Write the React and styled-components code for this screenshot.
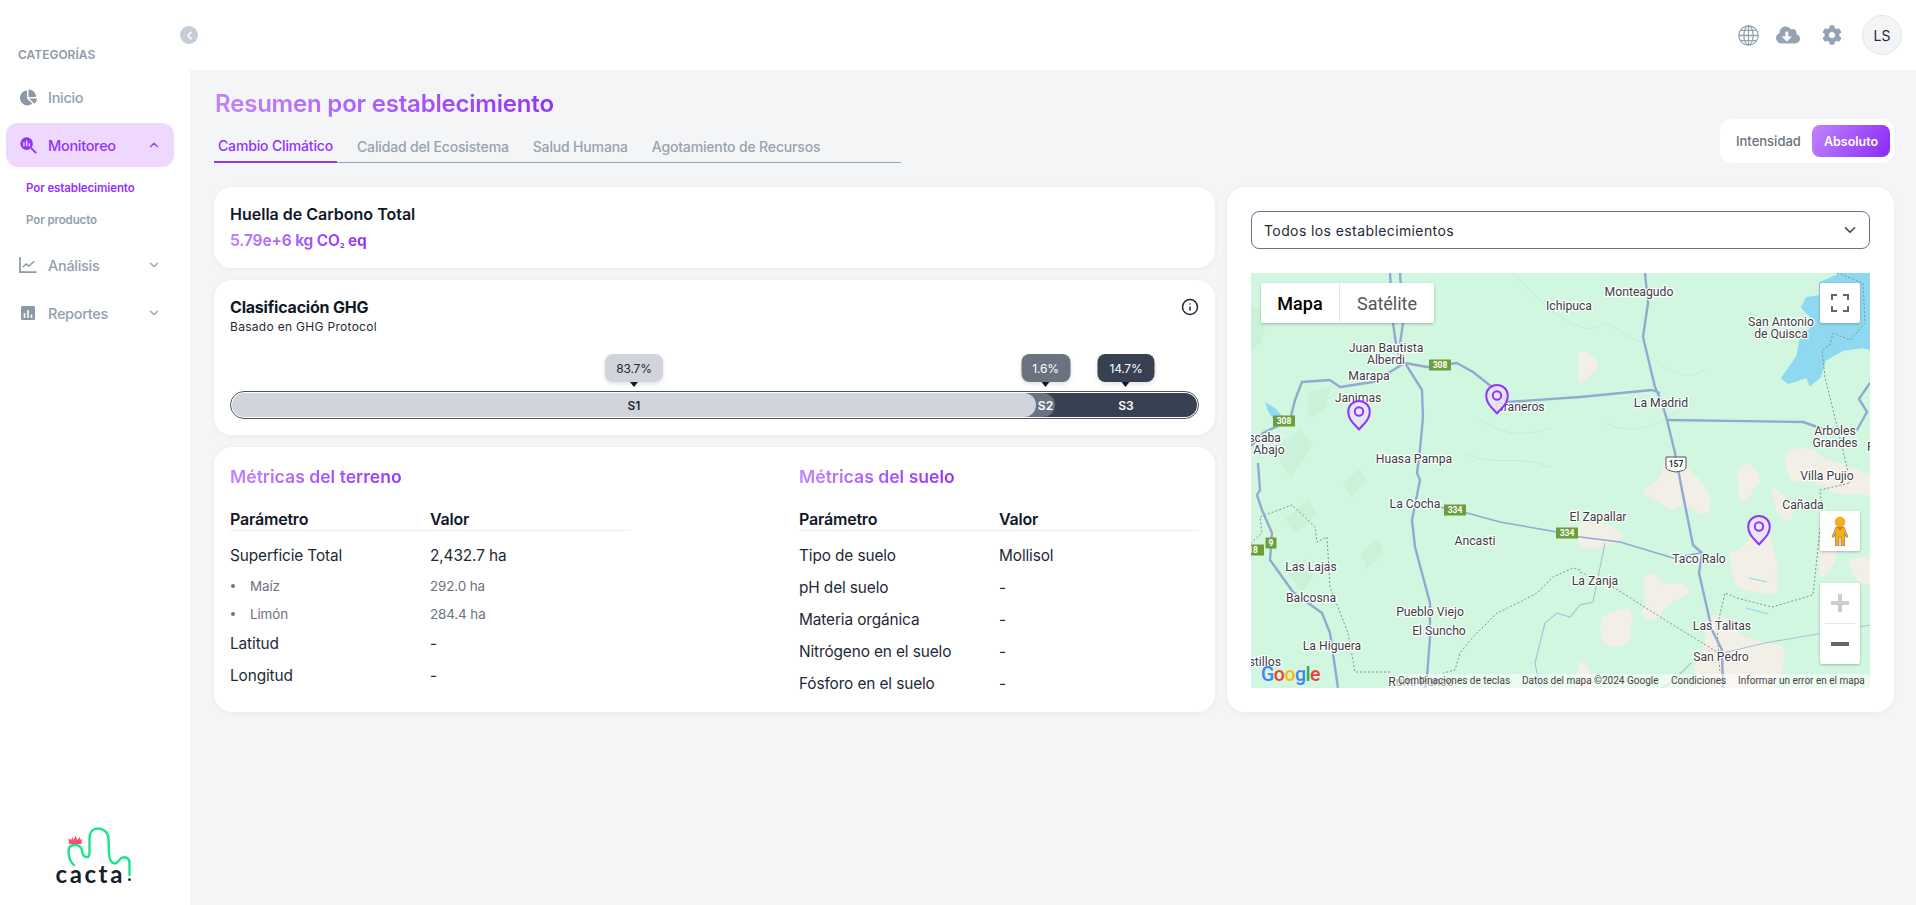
import React from 'react';
import styled, { createGlobalStyle } from 'styled-components';
import { FaChartPie, FaCloudDownloadAlt, FaCog } from 'react-icons/fa';
import { ChevronDown, ChevronUp, ChevronLeft, Info } from 'lucide-react';

const UI = '"Inter", "Noto Sans", sans-serif';
const ALT = '"Inter", "Open Sans", sans-serif';
const PURPLE = '#9333fb';
const GRAD = 'linear-gradient(90deg, #c084fc 0%, #9333fb 100%)';

const Global = createGlobalStyle`
  html, body { margin: 0; padding: 0; height: 100%; background: #f4f5f7; }
  #root { height: 905px; }
  * { box-sizing: border-box; }
`;

const Shell = styled.div`
  display: grid;
  grid-template-columns: 190px 1fr;
  width: 1916px;
  height: 905px;
  overflow: hidden;
  font-family: ${UI};
  background: #f4f5f7;
  position: relative;
`;

const Sidebar = styled.aside`
  background: #fff;
  display: flex;
  flex-direction: column;
  padding-top: 48px;
`;

const CategoryLabel = styled.div`
  font-size: 12px;
  line-height: 14px;
  font-weight: 600;
  color: #8e99a8;
  padding-left: 18px;
  margin-bottom: 13px;
`;

const Nav = styled.nav`
  display: flex;
  flex-direction: column;
  gap: 4px;
`;

const NavItem = styled.div`
  display: flex;
  align-items: center;
  height: 44px;
  width: 168px;
  margin-left: 6px;
  padding: 0 13px;
  border-radius: 12px;
  font-size: 14.5px;
  letter-spacing: -0.3px;
  font-weight: 500;
  color: ${(p) => (p.$active ? PURPLE : '#94a0ae')};
  background: ${(p) => (p.$active ? '#eed8fe' : 'transparent')};
`;

const NavIcon = styled.span`
  width: 18px;
  height: 18px;
  margin-right: 11px;
  display: flex;
  align-items: center;
  justify-content: center;
  color: ${(p) => (p.$active ? PURPLE : '#8d99a8')};
`;

const NavChevron = styled.span`
  margin-left: auto;
  display: flex;
  color: ${(p) => (p.$active ? PURPLE : '#94a0ae')};
`;

const SubList = styled.div`
  display: flex;
  flex-direction: column;
  margin: 1px 0 3px;
`;

const SubItem = styled.div`
  height: 32px;
  display: flex;
  align-items: center;
  padding-left: 26px;
  font-size: 11.5px;
  font-weight: 600;
  letter-spacing: -0.1px;
  color: ${(p) => (p.$active ? PURPLE : '#94a0ae')};
`;

const LogoWrap = styled.div`
  margin-top: auto;
  padding: 0 0 15px 50px;
  display: flex;
`;

const LogoText = styled.text`
  font-family: "Lato", sans-serif;
  font-size: 24px;
  font-weight: 700;
  letter-spacing: 2.6px;
  fill: #14212b;
`;

const Main = styled.div`
  display: flex;
  flex-direction: column;
  min-width: 0;
`;

const Header = styled.header`
  height: 70px;
  background: #fff;
  display: flex;
  align-items: center;
  justify-content: flex-end;
  padding-right: 14px;
`;

const HeaderIcon = styled.span`
  display: flex;
  width: 24px;
  justify-content: center;
  margin-right: ${(p) => p.$gap}px;
  color: #94a3b3;
`;

const Avatar = styled.div`
  width: 40px;
  height: 40px;
  border-radius: 50%;
  border: 1px solid #e5e7eb;
  background: #f3f4f6;
  display: flex;
  align-items: center;
  justify-content: center;
  font-size: 14px;
  color: #1f2937;
`;

const CollapseButton = styled.button`
  position: absolute;
  left: 180px;
  top: 26px;
  width: 18px;
  height: 18px;
  padding: 0;
  border: 0;
  border-radius: 50%;
  background: #c4ccd6;
  color: #fff;
  display: flex;
  align-items: center;
  justify-content: center;
`;

const Content = styled.main`
  padding: 20px 22px 0 24px;
`;

const TopRow = styled.div`
  display: flex;
  justify-content: space-between;
  align-items: flex-end;
  margin-bottom: 24px;
`;

const Title = styled.h1`
  margin: 0 0 12px 1px;
  font-size: 24px;
  line-height: 28px;
  font-weight: 600;
  letter-spacing: -0.2px;
  width: max-content;
  background: ${GRAD};
  -webkit-background-clip: text;
  background-clip: text;
  color: transparent;
`;

const TabBar = styled.div`
  display: flex;
  width: 687px;
  height: 33px;
  border-bottom: 1px solid #94a3b8;
`;

const Tab = styled.div`
  padding: 0 4px;
  margin-right: 16px;
  height: 33px;
  display: flex;
  align-items: center;
  font-size: 14px;
  font-weight: 500;
  letter-spacing: -0.16px;
  color: ${(p) => (p.$active ? PURPLE : '#98a3af')};
  border-bottom: ${(p) => (p.$active ? `2px solid ${PURPLE}` : '0')};
`;

const Toggle = styled.div`
  width: 174px;
  height: 44px;
  border-radius: 12px;
  background: #fff;
  display: flex;
  align-items: center;
  padding: 0 4px 0 16px;
  justify-content: space-between;
`;

const ToggleOption = styled.div`
  font-family: ${ALT};
  font-size: ${(p) => (p.$active ? 12.5 : 13)}px;
  font-weight: ${(p) => (p.$active ? 600 : 500)};
  color: ${(p) => (p.$active ? '#fff' : '#6b7280')};
  ${(p) =>
    p.$active &&
    `width: 78px; height: 32px; border-radius: 8px; display:flex; align-items:center; justify-content:center;
     background: linear-gradient(120deg, #c084fc 0%, #8a2bf5 100%);`}
`;

const Columns = styled.div`
  display: grid;
  grid-template-columns: 1001px 667px;
  gap: 12px;
`;

const Stack = styled.div`
  display: flex;
  flex-direction: column;
  gap: 12px;
`;

const Card = styled.section`
  background: #fff;
  border-radius: 18px;
  box-shadow: 0 1px 6px rgba(17, 24, 39, 0.05);
`;

const TotalCard = styled(Card)`
  height: 81px;
  padding: 15px 16px;
`;

const CardTitle = styled.div`
  font-size: 16px;
  line-height: 24px;
  font-weight: 600;
  color: #111827;
`;

const TotalValue = styled.div`
  margin-top: 3px;
  font-size: 15.5px;
  line-height: 24px;
  font-weight: 700;
  letter-spacing: -0.2px;
  width: max-content;
  background: ${GRAD};
  -webkit-background-clip: text;
  background-clip: text;
  color: transparent;
`;

const SmallSub = styled.span`
  font-size: 0.72em;
`;

const GhgCard = styled(Card)`
  height: 155px;
  padding: 16px 16px 0;
  position: relative;
`;

const GhgTitle = styled.div`
  font-family: ${ALT};
  font-size: 16px;
  line-height: 22px;
  font-weight: 700;
  letter-spacing: -0.2px;
  color: #111827;
`;

const GhgSub = styled.div`
  margin-top: 1px;
  font-family: ${ALT};
  font-size: 12px;
  line-height: 16px;
  letter-spacing: 0.3px;
  color: #1f2937;
`;

const InfoSpot = styled.span`
  position: absolute;
  top: 18px;
  right: 16px;
  display: flex;
  color: #1f2937;
`;

const Bar = styled.div`
  margin-top: 56px;
  height: 28px;
  display: flex;
  border-radius: 14px;
  border: 1px solid #4b5563;
  padding: 1px;
`;

const Segment = styled.div`
  position: relative;
  display: flex;
  height: 100%;
  background: ${(p) => p.$bg};
  color: ${(p) => p.$fg};
  z-index: ${(p) => p.$z};
  flex: 0 0 ${(p) => p.$w}px;
  margin-left: ${(p) => (p.$first ? 0 : -14)}px;
  padding-left: ${(p) => (p.$first ? 0 : 14)}px;
  border-radius: ${(p) => (p.$first ? '13px' : '0 13px 13px 0')};
`;

const SegmentLabel = styled.div`
  position: relative;
  flex: 1;
  display: flex;
  align-items: center;
  justify-content: center;
  font-family: ${ALT};
  font-size: 12px;
  font-weight: 600;
`;

const Bubble = styled.div`
  position: absolute;
  left: 50%;
  bottom: 35px;
  transform: translateX(-50%);
  height: 28px;
  width: ${(p) => p.$width}px;
  border-radius: 8px;
  display: flex;
  align-items: center;
  justify-content: center;
  font-family: ${ALT};
  font-size: 12px;
  font-weight: 400;
  letter-spacing: -0.2px;
  white-space: nowrap;
  background: ${(p) => p.$bg};
  color: ${(p) => p.$fg};
  box-shadow: 0 2px 4px rgba(0, 0, 0, 0.12);
  &::after {
    content: '';
    position: absolute;
    left: 50%;
    top: 100%;
    margin-left: -4.5px;
    border: 4.5px solid transparent;
    border-top: 5px solid #111827;
    border-bottom: 0;
  }
`;

const MetricsCard = styled(Card)`
  height: 265px;
  padding: 20px 16px 13px;
  display: flex;
  justify-content: space-between;
`;

const MetricsColumn = styled.div`
  width: 400px;
`;

const MetricsTitle = styled.h3`
  margin: 0 0 20px;
  font-size: 17.6px;
  line-height: 20px;
  font-weight: 600;
  width: max-content;
  background: ${GRAD};
  -webkit-background-clip: text;
  background-clip: text;
  color: transparent;
`;

const MetricsHead = styled.div`
  display: grid;
  grid-template-columns: 200px 200px;
  height: 24px;
  border-bottom: 1px solid #eceef1;
  margin-bottom: 8px;
  font-size: 16px;
  font-weight: 600;
  letter-spacing: -0.2px;
  color: #111827;
  align-items: center;
`;

const MetricsRow = styled.div`
  display: grid;
  grid-template-columns: 200px 200px;
  align-items: center;
  height: 32px;
  font-size: 15.4px;
  letter-spacing: -0.12px;
  color: #1f2937;
`;

const SubRow = styled.div`
  display: grid;
  grid-template-columns: 200px 200px;
  align-items: center;
  height: 28px;
  padding-top: 1px;
  font-size: 13.4px;
  letter-spacing: -0.1px;
  color: #6b7280;
`;

const SubName = styled.span`
  display: flex;
  align-items: center;
  &::before {
    content: '';
    width: 4px;
    height: 4px;
    border-radius: 50%;
    background: #6b7280;
    margin: 0 15px 0 1px;
  }
`;

const MapCard = styled(Card)`
  height: 525px;
  padding: 24px 24px 0;
`;

const SelectBox = styled.div`
  height: 38px;
  border: 1px solid #64748b;
  border-radius: 8px;
  display: flex;
  align-items: center;
  justify-content: space-between;
  padding: 0 10px 0 12px;
  font-family: ${ALT};
  font-size: 14px;
  letter-spacing: 0.4px;
  color: #1f2937;
  margin-bottom: 24px;
`;

const MapFrame = styled.div`
  position: relative;
  height: 415px;
  overflow: hidden;
  background: #d2f7e0;
`;

const MapSvg = styled.svg`
  display: block;
`;

const Place = styled.text`
  font-family: Roboto, sans-serif;
  font-size: 12.2px;
  fill: #3c4043;
  stroke: #fff;
  stroke-width: 2.4px;
  paint-order: stroke;
  stroke-linejoin: round;
`;

const ShieldText = styled.text`
  font-family: Roboto, sans-serif;
  font-size: 8.5px;
  font-weight: 700;
  fill: ${(p) => p.$fg || '#fff'};
`;

const MapTypes = styled.div`
  position: absolute;
  left: 10px;
  top: 10px;
  display: flex;
  height: 40px;
  background: #fff;
  border-radius: 2px;
  box-shadow: 0 1px 3px rgba(0, 0, 0, 0.25);
  font-family: Roboto, sans-serif;
  font-size: 18px;
`;

const MapType = styled.div`
  display: flex;
  align-items: center;
  justify-content: center;
  width: ${(p) => p.$w}px;
  color: ${(p) => (p.$active ? '#000' : '#565656')};
  font-weight: ${(p) => (p.$active ? 500 : 400)};
  border-right: ${(p) => (p.$active ? '1px solid #e6e6e6' : '0')};
`;

const MapButton = styled.div`
  position: absolute;
  right: 10px;
  top: ${(p) => p.$top}px;
  width: 40px;
  height: ${(p) => p.$h || 40}px;
  background: #fff;
  border-radius: 2px;
  box-shadow: 0 1px 3px rgba(0, 0, 0, 0.25);
  display: flex;
  flex-direction: column;
  align-items: center;
  justify-content: center;
`;

const ZoomDivider = styled.div`
  width: 30px;
  height: 1px;
  background: #e6e6e6;
`;

const ZoomCell = styled.div`
  flex: 1;
  display: flex;
  align-items: center;
  justify-content: center;
`;

const Attribution = styled.div`
  position: absolute;
  left: 145px;
  right: 0;
  bottom: 0;
  height: 14px;
  display: flex;
  background: rgba(255, 255, 255, 0.55);
  font-family: Roboto, sans-serif;
  font-size: 10px;
  line-height: 14px;
  color: #444;
  white-space: nowrap;
`;

const AttrItem = styled.span`
  position: absolute;
  left: ${(p) => p.$x}px;
`;

const GoogleMark = styled.div`
  position: absolute;
  left: 10px;
  bottom: 3px;
  font-family: Roboto, sans-serif;
  font-size: 19.5px;
  line-height: 20px;
  letter-spacing: -0.5px;
  font-weight: 500;
`;

const GoogleLetter = styled.span`
  color: ${(p) => p.$c};
`;

const PulseIcon = () => (
  <svg width="20" height="20" viewBox="0 0 20 20">
    <circle cx="8.5" cy="8.5" r="7" fill={PURPLE} />
    <path d="M13.5 13.5l5 5" stroke={PURPLE} strokeWidth="2" strokeLinecap="round" />
    <path d="M5.5 7v4.5M8.5 5v6.5M11.5 8v3.5" stroke="#eed8fe" strokeWidth="1.6" />
  </svg>
);

const LineChartIcon = () => (
  <svg width="19" height="18" viewBox="0 0 19 18" fill="none" stroke="#8d99a8">
    <path d="M1 0.5V16.5H18.5" strokeWidth="1.8" />
    <path d="M4 11.5L7.5 8l3 2.2L16 5" strokeWidth="1.5" />
  </svg>
);

const ReportIcon = () => (
  <svg width="14" height="14" viewBox="0 0 14 14">
    <rect width="14" height="14" rx="1.5" fill="#8d99a8" />
    <path d="M3.5 7v5M7 4v8M10.5 8.5V12" stroke="#fff" strokeWidth="1.6" />
  </svg>
);

const GlobeIcon = () => (
  <svg width="21" height="21" viewBox="0 0 20 20" fill="none" stroke="#94a3b3" strokeWidth="1.2">
    <circle cx="10" cy="10" r="9.2" />
    <ellipse cx="10" cy="10" rx="4.4" ry="9.2" />
    <path d="M10 .8v18.4M.8 10h18.4M2.2 5.2h15.6M2.2 14.8h15.6" />
  </svg>
);

const Logo = () => (
  <svg width="90" height="70" viewBox="50 20 90 70">
    <path
      d="M74 65C69 61 68.5 56 68.5 51C68.5 47 71 45 75 45C79 45 81.5 47 82 51C82.5 55 84 57 87 57C90 57 89.5 53 89.5 50V38C89.5 32 93 28.5 98 28.5C103 28.5 108 32 108.5 38L109 54C109.5 60 112 63.5 115 63.5C117.5 63.5 118.5 60 121.5 58C125 56 129.5 58 129.5 63V75"
      fill="none"
      stroke="#19e68c"
      strokeWidth="2.4"
      strokeLinecap="round"
    />
    <path
      d="M69 44L68.5 38.5L71 40L72.5 37L73.5 40L75.5 36L77.5 40L79.5 37L80.5 40L82 38.5L81.5 44Z"
      fill="#ff4d6d"
    />
    <LogoText x="55.5" y="83">cacta</LogoText>
    <circle cx="129.5" cy="79.7" r="1.4" fill="#14212b" />
  </svg>
);

const Pin = ({ x, y }) => (
  <g transform={`translate(${x - 12} ${y})`}>
    <path
      d="M12 30C7 24 1.2 20 1.2 12.2A10.8 10.8 0 0 1 22.8 12.2C22.8 20 17 24 12 30Z"
      fill="#e4e6f6"
      fillOpacity="0.9"
      stroke={PURPLE}
      strokeWidth="2"
      strokeLinejoin="round"
    />
    <circle cx="12" cy="12" r="4.2" fill="none" stroke={PURPLE} strokeWidth="2" />
  </g>
);

const poly = (pts) => pts.map((p) => p.join(',')).join(' ');

const highways = [
  [[139, 0], [142, 50], [146, 78], [154, 90], [171, 117], [172, 144], [169, 177], [166, 200], [169, 207], [161, 247], [164, 274], [179, 330], [179, 364], [176, 404], [174, 415]],
  [[149, 0], [152, 50], [148, 78], [154, 90]],
  [[154, 90], [176, 94], [206, 90], [222, 99], [241, 114], [256, 129], [329, 124], [401, 117], [409, 120]],
  [[394, 0], [397, 30], [392, 64], [404, 114], [411, 130], [416, 147], [424, 180], [431, 217], [442, 272], [451, 280], [448, 300], [461, 357], [471, 377], [472, 415]],
  [[416, 147], [552, 149], [569, 155], [606, 157], [616, 139], [608, 126], [619, 110]],
  [[154, 90], [122, 109], [89, 114], [79, 107], [51, 109], [44, 127], [39, 147], [12, 160], [0, 173]],
  [[7, 190], [9, 217], [6, 222], [11, 237], [21, 260], [19, 287], [42, 319], [71, 340], [79, 360], [87, 415]],
];

const minorRoads = [
  [[189, 234], [216, 240], [249, 249], [306, 259], [329, 264], [369, 269], [422, 285], [449, 280]],
];

const faintRoads = [
  [[354, 270], [342, 329], [329, 332], [319, 344], [306, 340], [294, 350], [284, 390], [289, 415]],
  [[472, 380], [514, 370], [619, 352]],
  [[440, 390], [420, 410], [410, 415]],
];

const borders = [
  [[586, 0], [612, 10], [614, 50], [599, 67], [582, 60], [579, 72], [571, 77], [574, 104], [596, 194], [599, 210], [569, 217], [571, 237], [562, 322], [521, 334], [486, 325], [474, 320], [466, 354], [469, 400]],
  [[329, 299], [359, 312], [406, 342], [466, 379]],
  [[329, 297], [322, 295], [302, 304], [286, 320], [269, 329], [246, 340], [222, 364], [209, 380], [204, 397], [192, 400]],
  [[139, 399], [104, 399], [97, 360], [79, 314], [76, 264], [66, 269], [64, 254], [41, 232], [9, 244], [11, 260], [0, 270]],
];

const rivers = [
  'M225 145C240 150 255 170 300 155',
  'M262 0C290 30 330 70 355 50C375 60 390 75 395 65',
  'M215 180C240 195 270 180 300 195',
  'M400 85C420 100 440 110 455 95',
  'M355 150C380 165 420 150 440 125',
];

const sands = [
  'M329 80C340 80 346 88 345 94C338 104 334 108 329 109Z',
  'M418 186C428 184 436 198 445 205C452 214 462 226 456 238C446 244 438 228 432 230C424 232 422 240 414 232C404 224 394 222 394 218C404 210 412 208 412 196Z',
  'M494 192C502 192 509 204 507 208C500 216 497 226 492 228C486 222 491 210 488 200Z',
  'M537 180C550 174 564 176 570 186C584 188 600 196 619 204L619 222C604 214 594 224 582 218C574 208 556 204 544 208C538 204 534 190 537 180Z',
  'M522 218C528 216 536 228 541 240C538 250 530 246 527 238Z',
  'M479 282C492 278 500 264 514 258C520 264 523 288 526 296C520 304 532 314 522 320C510 318 496 318 488 314C480 304 484 292 479 282Z',
  'M329 252C345 250 364 252 369 262C368 272 350 272 340 275L329 272Z',
  'M394 306C400 298 408 304 412 313C422 310 436 312 437 320C426 326 414 328 408 342C400 348 392 344 392 340C400 330 392 318 394 306Z',
  'M352 346C360 338 372 340 376 336C384 342 376 352 377 360C382 370 368 374 358 372C350 366 350 354 352 346Z',
  'M458 346C468 340 480 348 484 358C492 368 510 370 530 374C534 386 530 400 520 415L448 415C442 402 444 390 452 380C460 368 452 354 458 346Z',
  'M570 278C578 274 584 276 586 278C582 290 576 300 570 302Z',
  'M600 288C608 284 614 286 619 286L619 310C610 310 602 306 600 288Z',
  'M329 392C334 388 338 394 342 415L329 415Z',
];

const terrain = [
  'M0 30L16 44L10 70L0 78Z',
  'M56 120L80 112L74 136L58 146Z',
  'M20 176L50 156L62 172L40 204Z',
  'M34 246L58 226L66 242L44 262Z',
  'M36 300L54 286L64 300L52 320Z',
  'M92 210L108 196L116 206L100 226Z',
  'M110 280L128 264L132 282L116 296Z',
];

const places = [
  ['Ichipuca', 318, 37],
  ['Juan Bautista', 135, 79],
  ['Alberdi', 135, 91],
  ['Marapa', 118, 107],
  ['Janimas', 107, 129],
  ['Graneros', 269, 138],
  ['Abajo', 18, 181],
  ['Huasa Pampa', 163, 190],
  ['Monteagudo', 388, 23],
  ['San Antonio', 530, 53],
  ['de Quisca', 530, 65],
  ['La Madrid', 410, 134],
  ['Arboles', 584, 162],
  ['Grandes', 584, 174],
  ['Villa Pujio', 576, 207],
  ['La Cocha', 164, 235],
  ['Ancasti', 224, 272],
  ['El Zapallar', 347, 248],
  ['Las Lajas', 60, 298],
  ['Balcosna', 60, 329],
  ['La Higuera', 81, 377],
  ['Pueblo Viejo', 179, 343],
  ['El Suncho', 188, 362],
  ['La Zanja', 344, 312],
  ['Taco Ralo', 448, 290],
  ['Cañada', 552, 236],
  ['Las Talitas', 471, 357],
  ['San Pedro', 470, 388],
  ['Rumi Punco', 170, 413],
];

const shields = [
  ['308', 189, 92, 22],
  ['308', 33, 148, 22],
  ['334', 204, 237, 22],
  ['334', 316, 260, 22],
  ['9', 20, 270, 11],
  ['18', 2, 277, 22],
];

const MapDrawing = () => (
  <MapSvg width="619" height="415" viewBox="0 0 619 415">
    <rect width="619" height="415" fill="#d2f7e0" />
    <g fill="#c6efd6" opacity="0.6">
      {terrain.map((d) => (
        <path key={d} d={d} />
      ))}
    </g>
    {sands.map((d) => (
      <path key={d} d={d} fill="#f2efe6" stroke="#f2efe6" strokeWidth="3" strokeLinejoin="round" />
    ))}
    <path
      d="M592 0L569 10L569 23L556 25L551 34L556 40L562 45L559 57L551 60L546 84L531 105L537 110L556 104L559 112L569 104L574 87L592 77L612 74L619 76L619 0Z"
      fill="#8ed8f0"
      stroke="#8ed8f0"
      strokeWidth="2"
      strokeLinejoin="round"
    />
    <path d="M14 129L24 135L32 144L22 146L17 138Z" fill="#8ed8f0" />
    {rivers.map((d) => (
      <path key={d} d={d} fill="none" stroke="#b4ebe9" strokeWidth="0.8" />
    ))}
    <path d="M498 305L516 309M495 335L517 341" stroke="#8ed8f0" strokeWidth="1.2" fill="none" />
    {faintRoads.map((r, i) => (
      <polyline key={i} points={poly(r)} fill="none" stroke="#a9bfd8" strokeWidth="1.1" />
    ))}
    {borders.map((r, i) => (
      <polyline key={i} points={poly(r)} fill="none" stroke="#8a8f8c" strokeWidth="1" strokeDasharray="2 2" />
    ))}
    {minorRoads.map((r, i) => (
      <polyline key={i} points={poly(r)} fill="none" stroke="#93a9d0" strokeWidth="1.5" />
    ))}
    {highways.map((r, i) => (
      <polyline key={i} points={poly(r)} fill="none" stroke="#93a9d0" strokeWidth="2.4" strokeLinejoin="round" />
    ))}
    {places.map(([t, x, y]) => (
      <Place key={t} x={x} y={y} textAnchor="middle">{t}</Place>
    ))}
    <Place x="30" y="169" textAnchor="end">Escaba</Place>
    <Place x="30" y="393" textAnchor="end">Castillos</Place>
    <Place x="616" y="178">Pozo</Place>
    {shields.map(([t, x, y, w]) => (
      <g key={`${t}${x}`}>
        <rect x={x - w / 2} y={y - 5.5} width={w} height="11" fill="#6c9e3c" />
        <ShieldText x={x} y={y + 3} textAnchor="middle">{t}</ShieldText>
      </g>
    ))}
    <path d="M415 184H435V194C435 197 431 198 425 199C419 198 415 197 415 194Z" fill="#fff" stroke="#555" strokeWidth="1" />
    <ShieldText $fg="#333" x="425" y="194" textAnchor="middle">157</ShieldText>
    <Pin x={108} y={126.5} />
    <Pin x={246} y={110.5} />
    <Pin x={508} y={241.5} />
  </MapSvg>
);

const FullscreenGlyph = () => (
  <svg width="18" height="18" viewBox="0 0 18 18" fill="none" stroke="#666" strokeWidth="2">
    <path d="M1 6V1H6M12 1H17V6M17 12V17H12M6 17H1V12" />
  </svg>
);

const Pegman = () => (
  <svg width="18" height="30" viewBox="0 0 18 30">
    <path d="M5 11H13L17 21H15L13.5 17V30H10V21H8V30H4.5V17L3 21H1Z" fill="#f9ad1a" stroke="#857a66" strokeWidth="0.7" />
    <circle cx="9" cy="6" r="5" fill="#f9ad1a" stroke="#c99a3a" strokeWidth="0.5" />
    <path d="M6 11H12L9 15Z" fill="#de7a2c" />
  </svg>
);

const Plus = ({ color }) => (
  <svg width="18" height="18" viewBox="0 0 18 18">
    <path d="M7 0h4v7h7v4h-7v7H7v-7H0V7h7z" fill={color} />
  </svg>
);

const Minus = ({ color }) => (
  <svg width="18" height="18" viewBox="0 0 18 18">
    <rect y="7" width="18" height="4" fill={color} />
  </svg>
);

const left = [
  ['Superficie Total', '2,432.7 ha'],
  ['sub', 'Maíz', '292.0 ha'],
  ['sub', 'Limón', '284.4 ha'],
  ['Latitud', '-'],
  ['Longitud', '-'],
];

const right = [
  ['Tipo de suelo', 'Mollisol'],
  ['pH del suelo', '-'],
  ['Materia orgánica', '-'],
  ['Nitrógeno en el suelo', '-'],
  ['Fósforo en el suelo', '-'],
];

const MetricsTable = ({ title, rows }) => (
  <MetricsColumn>
    <MetricsTitle>{title}</MetricsTitle>
    <MetricsHead>
      <span>Parámetro</span>
      <span>Valor</span>
    </MetricsHead>
    {rows.map((r) =>
      r[0] === 'sub' ? (
        <SubRow key={r[1]}>
          <SubName>{r[1]}</SubName>
          <span>{r[2]}</span>
        </SubRow>
      ) : (
        <MetricsRow key={r[0]}>
          <span>{r[0]}</span>
          <span>{r[1]}</span>
        </MetricsRow>
      )
    )}
  </MetricsColumn>
);

const segments = [
  { id: 'S1', pct: '83.7%', w: 804, bg: '#d1d5db', fg: '#1f2937', z: 3, bw: 58, first: true },
  { id: 'S2', pct: '1.6%', w: 33, bg: '#6b7280', fg: '#fff', z: 2, bw: 49 },
  { id: 'S3', pct: '14.7%', w: 156, bg: '#374151', fg: '#fff', z: 1, bw: 57 },
];

export default function App() {
  return (
    <Shell>
      <Global />
      <Sidebar>
        <CategoryLabel>CATEGORÍAS</CategoryLabel>
        <Nav>
          <NavItem>
            <NavIcon><FaChartPie size={17} /></NavIcon>
            Inicio
          </NavItem>
          <NavItem $active>
            <NavIcon $active><PulseIcon /></NavIcon>
            Monitoreo
            <NavChevron $active><ChevronUp size={14} /></NavChevron>
          </NavItem>
          <SubList>
            <SubItem $active>Por establecimiento</SubItem>
            <SubItem>Por producto</SubItem>
          </SubList>
          <NavItem>
            <NavIcon><LineChartIcon /></NavIcon>
            Análisis
            <NavChevron><ChevronDown size={14} /></NavChevron>
          </NavItem>
          <NavItem>
            <NavIcon><ReportIcon /></NavIcon>
            Reportes
            <NavChevron><ChevronDown size={14} /></NavChevron>
          </NavItem>
        </Nav>
        <LogoWrap><Logo /></LogoWrap>
      </Sidebar>
      <Main>
        <Header>
          <HeaderIcon $gap={16}><GlobeIcon /></HeaderIcon>
          <HeaderIcon $gap={20}><FaCloudDownloadAlt size={26} /></HeaderIcon>
          <HeaderIcon $gap={18}><FaCog size={20} /></HeaderIcon>
          <Avatar>LS</Avatar>
        </Header>
        <Content>
          <TopRow>
            <div>
              <Title>Resumen por establecimiento</Title>
              <TabBar>
                <Tab $active>Cambio Climático</Tab>
                <Tab>Calidad del Ecosistema</Tab>
                <Tab>Salud Humana</Tab>
                <Tab>Agotamiento de Recursos</Tab>
              </TabBar>
            </div>
            <Toggle>
              <ToggleOption>Intensidad</ToggleOption>
              <ToggleOption $active>Absoluto</ToggleOption>
            </Toggle>
          </TopRow>
          <Columns>
            <Stack>
              <TotalCard>
                <CardTitle>Huella de Carbono Total</CardTitle>
                <TotalValue>5.79e+6 kg CO<SmallSub>₂</SmallSub> eq</TotalValue>
              </TotalCard>
              <GhgCard>
                <GhgTitle>Clasificación GHG</GhgTitle>
                <GhgSub>Basado en GHG Protocol</GhgSub>
                <InfoSpot><Info size={18} /></InfoSpot>
                <Bar>
                  {segments.map((s) => (
                    <Segment key={s.id} $bg={s.bg} $fg={s.fg} $z={s.z} $w={s.w} $first={s.first}>
                      <SegmentLabel>
                        {s.id}
                        <Bubble $bg={s.bg} $fg={s.fg} $width={s.bw}>{s.pct}</Bubble>
                      </SegmentLabel>
                    </Segment>
                  ))}
                </Bar>
              </GhgCard>
              <MetricsCard>
                <MetricsTable title="Métricas del terreno" rows={left} />
                <MetricsTable title="Métricas del suelo" rows={right} />
              </MetricsCard>
            </Stack>
            <MapCard>
              <SelectBox>
                Todos los establecimientos
                <ChevronDown size={18} color="#374151" />
              </SelectBox>
              <MapFrame>
                <MapDrawing />
                <MapTypes>
                  <MapType $active $w={79}>Mapa</MapType>
                  <MapType $w={94}>Satélite</MapType>
                </MapTypes>
                <MapButton $top={10}><FullscreenGlyph /></MapButton>
                <MapButton $top={238}><Pegman /></MapButton>
                <MapButton $top={310} $h={81}>
                  <ZoomCell><Plus color="#cdcdcd" /></ZoomCell>
                  <ZoomDivider />
                  <ZoomCell><Minus color="#666" /></ZoomCell>
                </MapButton>
                <GoogleMark>
                  <GoogleLetter $c="#4285f4">G</GoogleLetter>
                  <GoogleLetter $c="#ea4335">o</GoogleLetter>
                  <GoogleLetter $c="#fbbc05">o</GoogleLetter>
                  <GoogleLetter $c="#4285f4">g</GoogleLetter>
                  <GoogleLetter $c="#34a853">l</GoogleLetter>
                  <GoogleLetter $c="#ea4335">e</GoogleLetter>
                </GoogleMark>
                <Attribution>
                  <AttrItem $x={2}>Combinaciones de teclas</AttrItem>
                  <AttrItem $x={126}>Datos del mapa ©2024 Google</AttrItem>
                  <AttrItem $x={275}>Condiciones</AttrItem>
                  <AttrItem $x={342}>Informar un error en el mapa</AttrItem>
                </Attribution>
              </MapFrame>
            </MapCard>
          </Columns>
        </Content>
      </Main>
      <CollapseButton aria-label="Contraer"><ChevronLeft size={13} strokeWidth={3} /></CollapseButton>
    </Shell>
  );
}
